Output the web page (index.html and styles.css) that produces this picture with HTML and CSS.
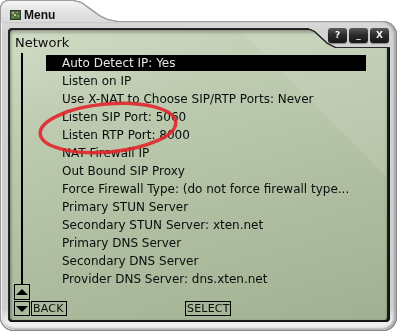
FILE: index.html
```html
<!DOCTYPE html>
<html lang="en">
<head>
  <meta charset="UTF-8" />
  <title>Menu</title>
  <link rel="stylesheet" href="styles.css">
</head>
<body>

  <div class="window">
    <div class="shell">
      <div class="titlebar">
        <div class="tab">
          <svg class="app-icon" width="11" height="10" viewBox="0 0 11 10">
            <rect x="0" y="0" width="11" height="10" fill="#2b3a22" />
            <rect x="1" y="1" width="9" height="8" fill="#4f6b3c" />
            <rect x="2" y="2" width="2" height="2" fill="#9fb884" />
            <rect x="6" y="2" width="2" height="1" fill="#86a06a" />
            <rect x="4" y="4" width="2" height="2" fill="#b7cc9c" />
            <rect x="7" y="5" width="2" height="2" fill="#7f995f" />
            <rect x="2" y="6" width="2" height="2" fill="#6c8650" />
          </svg>
          <span class="title">Menu</span>
        </div>
      </div>

      <div class="frame">
        <div class="win-buttons">
          <span class="wbtn">?</span>
          <span class="wbtn">_</span>
          <span class="wbtn">X</span>
        </div>

        <div class="screen-edge">
          <div class="screen">
            <div class="screen-title">Network</div>

            <div class="screen-body">
              <div class="scroll">
                <div class="track"></div>
                <div class="sbtn">
                  <svg width="12" height="8" viewBox="0 0 12 8"><polygon points="0,7 6,1 12,7" fill="#000" /></svg>
                </div>
              </div>

              <ul class="menu-list">
                <li class="selected">Auto Detect IP: Yes</li>
                <li>Listen on IP</li>
                <li>Use X-NAT to Choose SIP/RTP Ports: Never</li>
                <li>Listen SIP Port: 5060</li>
                <li>Listen RTP Port: 8000</li>
                <li>NAT Firewall IP</li>
                <li>Out Bound SIP Proxy</li>
                <li>Force Firewall Type: (do not force firewall type...</li>
                <li>Primary STUN Server</li>
                <li>Secondary STUN Server: xten.net</li>
                <li>Primary DNS Server</li>
                <li>Secondary DNS Server</li>
                <li>Provider DNS Server: dns.xten.net</li>
              </ul>
            </div>

            <div class="screen-foot">
              <div class="sbtn">
                <svg width="12" height="8" viewBox="0 0 12 8"><polygon points="0,1 12,1 6,7" fill="#000" /></svg>
              </div>
              <span class="softkey back">BACK</span>
              <span class="softkey select">SELECT</span>
            </div>
          </div>
        </div>
      </div>
    </div>

    <!-- hand drawn mark over the two port rows -->
    <svg class="mark" width="160" height="70" viewBox="0 0 160 70">
      <ellipse cx="78" cy="33" rx="68" ry="24" transform="rotate(-5 78 33)"
               fill="none" stroke="#e3262b" stroke-width="3.5" opacity="0.9" />
    </svg>
  </div>

</body>
</html>
```

FILE: styles.css
```css
* { box-sizing: border-box; }

body {
  margin: 0;
  background: #ffffff;
  font-family: 'DejaVu Sans', sans-serif;
  color: #0c0c0c;
}

.window {
  position: relative;
  width: 397px;
  height: 331px;
}

.shell {
  filter: drop-shadow(1px 0 0 #8a8a8a) drop-shadow(-1px 0 0 #9a9a9a)
          drop-shadow(0 1px 0 #8a8a8a) drop-shadow(0 -1px 0 #a0a0a0);
  padding: 1px 1px 0 1px;
}

.titlebar {
  height: 21px;
  display: flex;
}

.tab {
  width: 116px;
  height: 21px;
  margin-left: 0;
  display: flex;
  align-items: center;
  gap: 3px;
  padding: 6px 0 0 9px;
  background: linear-gradient(180deg, #f7f7f7 0%, #e6e6e6 40%, #dadada 100%);
  border-radius: 8px 0 0 0;
  clip-path: polygon(0 0, 72px 0, 80px 2px, 98px 15px, 106px 19px, 116px 21px, 0 21px);
}

.app-icon { flex: none; }

.title {
  font-family: 'Liberation Sans', Arial, sans-serif;
  font-weight: bold;
  font-size: 12px;
  line-height: 12px;
  color: #111;
}

.frame {
  position: relative;
  height: 308px;
  padding: 7px 7px 9px 8px;
  background: linear-gradient(180deg, #dadada 0%, #d3d3d3 3%, #cfcfcf 50%, #d0d0d0 93%, #ececec 97%, #f2f2f2 100%);
  border-radius: 0 14px 14px 14px;
  box-shadow: inset 1px 0 0 #f4f4f4, inset -2px 0 2px #a9a9a9, inset 0 -2px 2px #b5b5b5;
}

.win-buttons {
  position: absolute;
  top: 6px;
  right: 7px;
  display: flex;
  gap: 2px;
}

.wbtn {
  width: 19px;
  height: 15px;
  border-radius: 3px;
  background: linear-gradient(180deg, #5a5a5a 0%, #2c2c2c 45%, #161616 100%);
  box-shadow: 0 1px 1px rgba(0,0,0,0.35);
  color: #f2f2f2;
  font-family: 'DejaVu Sans', sans-serif;
  font-weight: bold;
  font-size: 9px;
  line-height: 15px;
  text-align: center;
}

.screen-edge {
  filter: drop-shadow(1px 0 0 #111) drop-shadow(-1px 0 0 #2a2a2a)
          drop-shadow(0 1px 0 #111) drop-shadow(0 -1px 0 #2a2a2a);
}

.screen {
  height: 292px;
  display: flex;
  flex-direction: column;
  padding: 5px 0 4px 4px;
  border: 1px solid #1a1a1a;
  border-right-width: 2px;
  border-radius: 4px;
  background:
    linear-gradient(225deg, rgba(255,255,255,0.10) 0 22%, rgba(255,255,255,0) 22.3%),
    linear-gradient(165deg, #d2dcc6 0%, #bccaaf 30%, #aebd9f 65%, #a0b192 100%);
  box-shadow: inset 0 3px 3px rgba(0,0,0,0.22), inset 2px 0 2px rgba(0,0,0,0.15);
  clip-path: polygon(0 0, 298px 0, 305px 3px, 318px 15px, 326px 19px, 100% 19px, 100% 100%, 0 100%);
}

.screen-title {
  font-size: 13px;
  line-height: 16px;
  padding-left: 1px;
}

.screen-body {
  display: flex;
  height: 247px;
  margin-top: 2px;
}

.scroll {
  width: 16px;
  display: flex;
  flex-direction: column;
  align-items: center;
}

.track {
  flex: 1;
  width: 2px;
  background: #000;
}

.sbtn {
  width: 16px;
  height: 16px;
  border: 1px solid #000;
  display: flex;
  align-items: center;
  justify-content: center;
}

.menu-list {
  list-style: none;
  margin: 0 0 0 16px;
  padding: 2px 0 0 0;
  width: 320px;
}

.menu-list li {
  height: 16px;
  margin-bottom: 2px;
  padding-left: 16px;
  font-size: 12px;
  line-height: 16px;
  white-space: nowrap;
}

.menu-list li.selected {
  background: #000;
  color: #e6e6e6;
}

.screen-foot {
  display: flex;
  margin-top: 1px;
  height: 15px;
}

.screen-foot .sbtn { height: 15px; }

.softkey {
  height: 15px;
  border: 1px solid #000;
  font-size: 11px;
  line-height: 13px;
  padding: 0 1px;
  letter-spacing: 0.2px;
}

.back { margin-left: 1px; width: 36px; }

.select { margin-left: 118px; width: 46px; }

.mark {
  position: absolute;
  left: 30px;
  top: 95px;
}
```
